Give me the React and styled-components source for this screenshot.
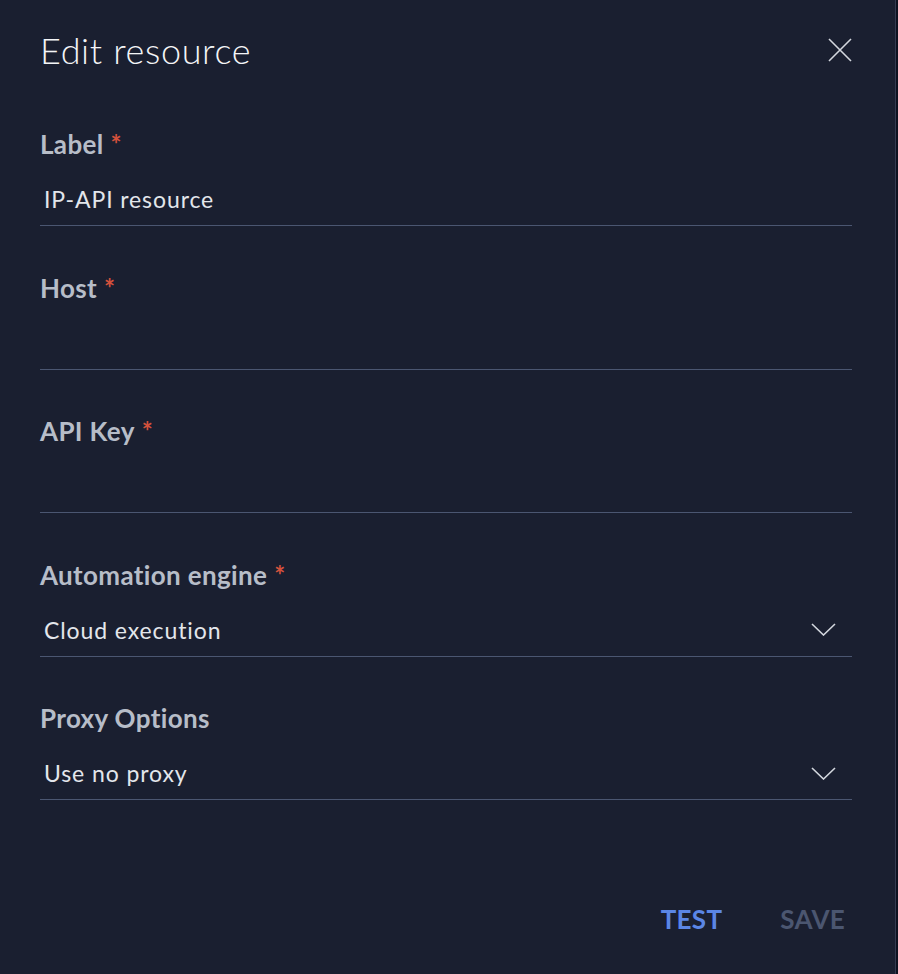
import styled, { createGlobalStyle } from "styled-components";

const GlobalStyle = createGlobalStyle`
    body {
        margin: 0;
        background: #0e1220;
        font-family: "Lato", "Noto Sans", sans-serif;
    }
`;

const Panel = styled.section`
    width: 896px;
    height: 974px;
    box-sizing: border-box;
    background: #1a1f30;
    border-right: 1px solid #343b50;
    padding: 30px 43px 0 40px;
    display: flex;
    flex-direction: column;
`;

const Header = styled.header`
    display: flex;
    justify-content: space-between;
    align-items: center;
    height: 40px;
    margin-bottom: 60px;
`;

const Title = styled.h1`
    margin: 0;
    font-size: 36px;
    font-weight: 300;
    color: #f4f5f7;
    letter-spacing: 0.65px;
`;

const CloseButton = styled.button`
    background: none;
    border: 0;
    padding: 0;
    width: 24px;
    height: 24px;
    display: flex;
    align-items: center;
    justify-content: center;
    cursor: pointer;
`;

const Field = styled.div`
    display: flex;
    flex-direction: column;
    margin-bottom: 47.5px;
`;

const Label = styled.label`
    display: block;
    line-height: 28px;
    margin-bottom: 2px;
    font-size: 26px;
    font-weight: 700;
    color: #b7bdc8;
    letter-spacing: 0.35px;
`;

const Required = styled.span`
    color: #d4513c;
    margin-left: 7px;
`;

const InputRow = styled.div`
    margin-top: 18px;
    height: 48px;
    box-sizing: border-box;
    border-bottom: 1px solid #4b5671;
    display: flex;
    align-items: center;
    justify-content: space-between;
    padding: 0 16px 5px 4px;
`;

const Value = styled.span`
    font-size: 23px;
    color: #e3e6eb;
    letter-spacing: 0.9px;
`;

const Footer = styled.footer`
    display: flex;
    justify-content: flex-end;
    gap: 58px;
    margin-top: 55px;
    padding-right: 7px;
`;

const Action = styled.button`
    background: none;
    border: 0;
    padding: 0;
    font-family: inherit;
    font-size: 26px;
    font-weight: 700;
    letter-spacing: 0.3px;
    color: ${(props) => (props.disabled ? "#4b5670" : "#5b86e5")};
`;

function CloseIcon() {
    return (
        <svg width="24" height="24" viewBox="0 0 24 24">
            <path d="M1 1 L23 23 M23 1 L1 23" stroke="#d3d7de" strokeWidth="1.6" fill="none" />
        </svg>
    );
}

function ChevronIcon() {
    return (
        <svg width="25" height="13" viewBox="0 0 25 13">
            <path d="M1 1 L12.5 12 L24 1" stroke="#d3d7de" strokeWidth="1.6" fill="none" />
        </svg>
    );
}

const fields = [
    { label: "Label", required: true, value: "IP-API resource" },
    { label: "Host", required: true, value: "" },
    { label: "API Key", required: true, value: "" },
    { label: "Automation engine", required: true, value: "Cloud execution", select: true },
    { label: "Proxy Options", required: false, value: "Use no proxy", select: true },
];

export default function App() {
    return (
        <>
            <GlobalStyle />
            <Panel>
                <Header>
                    <Title>Edit resource</Title>
                    <CloseButton aria-label="Close">
                        <CloseIcon />
                    </CloseButton>
                </Header>
                {fields.map((f) => (
                    <Field key={f.label}>
                        <Label>
                            {f.label}
                            {f.required && <Required>*</Required>}
                        </Label>
                        <InputRow>
                            <Value>{f.value}</Value>
                            {f.select && <ChevronIcon />}
                        </InputRow>
                    </Field>
                ))}
                <Footer>
                    <Action>TEST</Action>
                    <Action disabled>SAVE</Action>
                </Footer>
            </Panel>
        </>
    );
}
